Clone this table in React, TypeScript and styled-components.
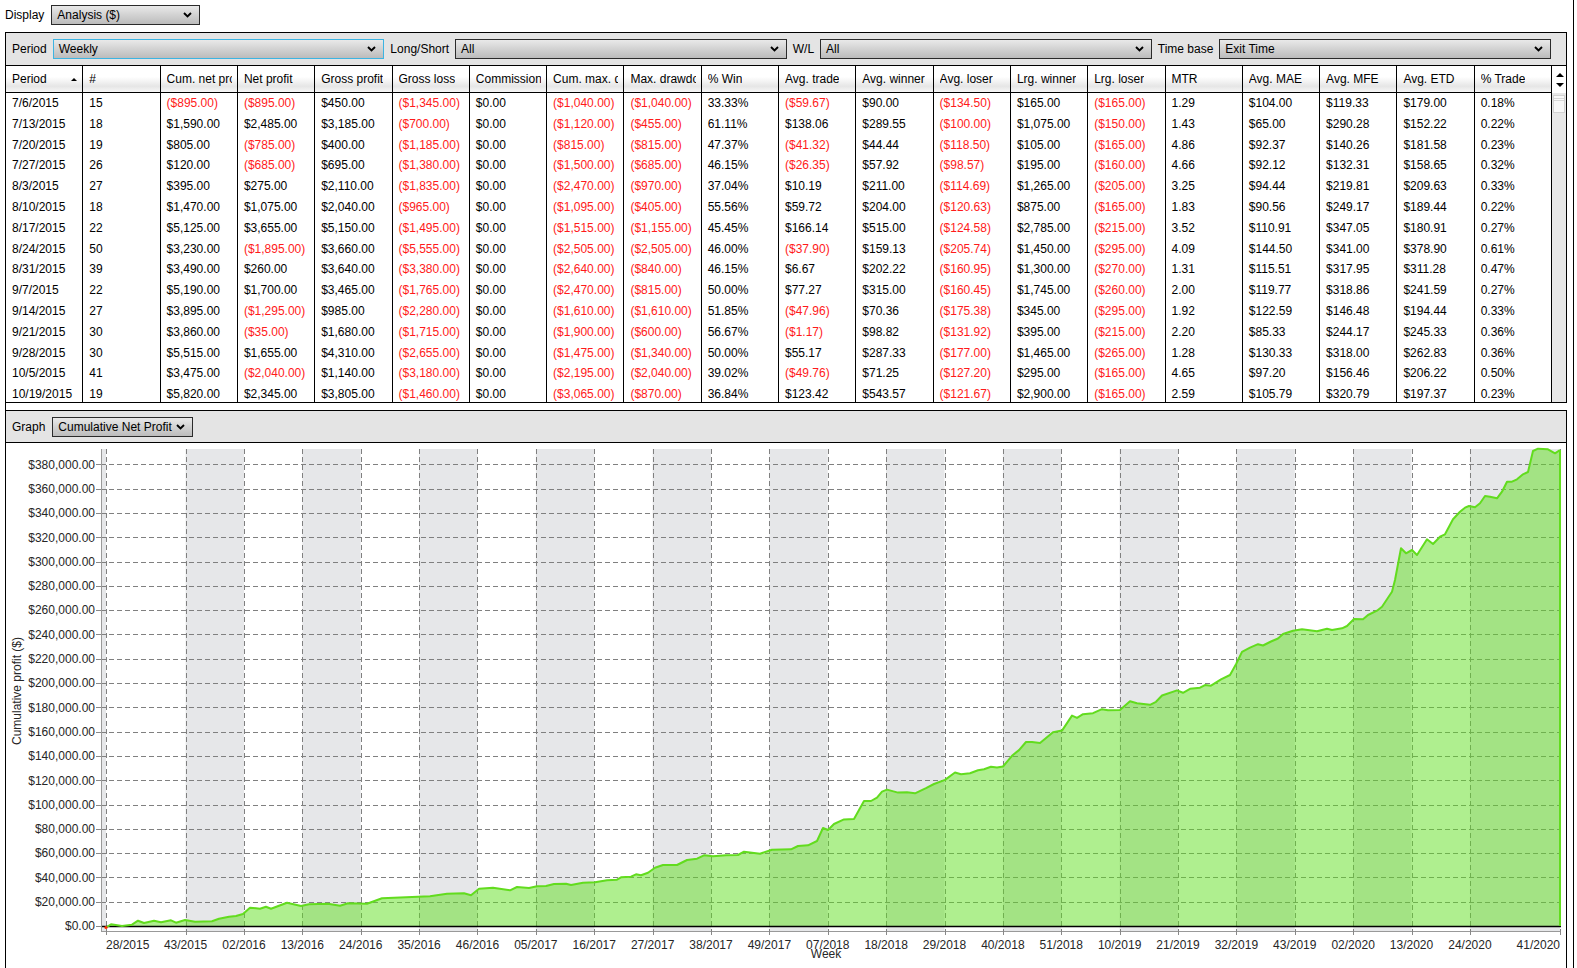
import React from 'react';
import styled, { createGlobalStyle } from 'styled-components';

const GlobalStyle = createGlobalStyle`
  html, body {
    margin: 0;
    padding: 0;
    background: #fff;
    overflow: hidden;
  }
  body {
    font-family: "Liberation Sans", Arial, sans-serif;
    font-size: 12px;
    color: #000;
  }
`;

const Page = styled.div`
  display: flex;
  width: 1577px;
  height: 968px;
`;

const LeftColumn = styled.div`
  display: flex;
  flex-direction: column;
  width: 1567px;
  flex: none;
`;

const RightRule = styled.div`
  margin-left: 6px;
  width: 0;
  border-left: 1px solid #000;
`;

const TopBar = styled.div`
  display: flex;
  align-items: center;
  gap: 7px;
  height: 32px;
  box-sizing: border-box;
  padding: 5px 0 7px 5px;
`;

const Label = styled.span`
  white-space: nowrap;
  line-height: 14px;
`;

const Frame = styled.div`
  display: flex;
  flex-direction: column;
  margin-left: 5px;
  width: 1562px;
  height: 950px;
  box-sizing: border-box;
  border-left: 1px solid #000;
  border-top: 1px solid #000;
`;

const FilterBar = styled.div`
  display: flex;
  align-items: center;
  gap: 6px;
  height: 33px;
  box-sizing: border-box;
  padding: 0 15px 0 6px;
  background: #e4e4e4;
  border-bottom: 1px solid #000;
  border-right: 1px solid #000;
`;

const SelectBox = styled.div<{ $width?: number; $focused?: boolean }>`
  display: flex;
  align-items: center;
  justify-content: space-between;
  ${(p) => (p.$width ? `width: ${p.$width}px;` : 'flex: 1 1 0;')}
  height: 20px;
  box-sizing: border-box;
  padding: 0 7px 0 5px;
  border: 1px solid ${(p) => (p.$focused ? '#3db4e2' : '#2b2b2b')};
  background: linear-gradient(to bottom, #e9e9e9 0%, #d4d4d4 45%, #bcbcbc 100%);
  white-space: nowrap;
  overflow: hidden;
`;

const Chevron = () => (
  <svg width="9" height="6" viewBox="0 0 9 6">
    <polyline points="1,1 4.5,4.5 8,1" fill="none" stroke="#000" strokeWidth="1.9" />
  </svg>
);

const Select = ({ value, width, focused }: { value: string; width?: number; focused?: boolean }) => (
  <SelectBox $width={width} $focused={focused}>
    <span>{value}</span>
    <Chevron />
  </SelectBox>
);

const Table = styled.div`
  display: flex;
  border-right: 1px solid #000;
  border-bottom: 1px solid #000;
`;

const DataArea = styled.div`
  flex: 1;
  min-width: 0;
`;

const HeaderRow = styled.div`
  display: grid;
  grid-template-columns: repeat(20, 1fr);
  height: 27px;
  box-sizing: border-box;
  border-bottom: 1px solid #000;
  background: linear-gradient(to bottom, #fff 0%, #fff 42%, #e6e6e6 78%, #f6f6f6 100%);
`;

const HeaderCell = styled.div`
  display: flex;
  align-items: center;
  justify-content: space-between;
  min-width: 0;
  padding: 0 5px 0 6px;
  border-right: 1px solid #000;
  white-space: nowrap;
  overflow: hidden;
`;

const HeaderText = styled.span`
  min-width: 0;
  overflow: hidden;
  text-overflow: clip;
`;

const SortArrow = styled.span`
  width: 0;
  height: 0;
  border-left: 3px solid transparent;
  border-right: 3px solid transparent;
  border-bottom: 3px solid #000;
  flex: none;
`;

const Body = styled.div`
  height: 309px;
  overflow: hidden;
`;

const Row = styled.div`
  display: grid;
  grid-template-columns: repeat(20, 1fr);
  height: 20.8px;
`;

const Cell = styled.div<{ $neg?: boolean }>`
  min-width: 0;
  padding: 0 4px 0 6px;
  border-right: 1px solid #000;
  line-height: 20.8px;
  white-space: nowrap;
  overflow: hidden;
  color: ${(p) => (p.$neg ? '#ff1a1a' : '#000')};
`;

const ScrollBar = styled.div`
  display: flex;
  flex-direction: column;
  width: 14px;
`;

const ScrollHead = styled.div`
  display: flex;
  flex-direction: column;
  align-items: center;
  justify-content: center;
  gap: 6px;
  height: 27px;
  padding-left: 2px;
  box-sizing: border-box;
  background: #fff;
`;

const ArrowUp = styled.span`
  width: 0;
  height: 0;
  border-left: 4px solid transparent;
  border-right: 4px solid transparent;
  border-bottom: 4px solid #000;
`;

const ArrowDown = styled.span`
  width: 0;
  height: 0;
  border-left: 4px solid transparent;
  border-right: 4px solid transparent;
  border-top: 4px solid #000;
`;

const Track = styled.div`
  flex: 1;
  padding: 2px 0 0 1px;
  background: #e7e7e7;
`;

const Thumb = styled.div`
  width: 12px;
  height: 18px;
  box-sizing: border-box;
  border: 1px solid #d2d2d2;
  background: linear-gradient(to bottom, #fafafa 0px, #fafafa 2px, #d8d8d8 2px, #d8d8d8 3px, #fafafa 3px, #fafafa 4px, #d8d8d8 4px, #d8d8d8 5px, #f8f8f8 5px);
`;

const Gap = styled.div`
  height: 7px;
  flex: none;
`;

const GraphPanel = styled.div`
  flex: 1;
  display: flex;
  flex-direction: column;
  border-top: 1px solid #000;
  border-right: 1px solid #000;
  min-height: 0;
`;

const GraphHeader = styled.div`
  display: flex;
  align-items: center;
  gap: 7px;
  height: 32px;
  flex: none;
  box-sizing: border-box;
  padding-left: 6px;
  background: #e4e4e4;
  border-bottom: 1px solid #000;
`;

const GraphBody = styled.div`
  flex: 1;
  overflow: hidden;
  svg {
    display: block;
  }
`;

const headers = [
  'Period', '#', 'Cum. net profit', 'Net profit', 'Gross profit', 'Gross loss', 'Commission',
  'Cum. max. drawdown', 'Max. drawdown', '% Win', 'Avg. trade', 'Avg. winner', 'Avg. loser',
  'Lrg. winner', 'Lrg. loser', 'MTR', 'Avg. MAE', 'Avg. MFE', 'Avg. ETD', '% Trade',
];

const rows: string[][] = [
  ['7/6/2015', '15', '($895.00)', '($895.00)', '$450.00', '($1,345.00)', '$0.00', '($1,040.00)', '($1,040.00)', '33.33%', '($59.67)', '$90.00', '($134.50)', '$165.00', '($165.00)', '1.29', '$104.00', '$119.33', '$179.00', '0.18%'],
  ['7/13/2015', '18', '$1,590.00', '$2,485.00', '$3,185.00', '($700.00)', '$0.00', '($1,120.00)', '($455.00)', '61.11%', '$138.06', '$289.55', '($100.00)', '$1,075.00', '($150.00)', '1.43', '$65.00', '$290.28', '$152.22', '0.22%'],
  ['7/20/2015', '19', '$805.00', '($785.00)', '$400.00', '($1,185.00)', '$0.00', '($815.00)', '($815.00)', '47.37%', '($41.32)', '$44.44', '($118.50)', '$105.00', '($165.00)', '4.86', '$92.37', '$140.26', '$181.58', '0.23%'],
  ['7/27/2015', '26', '$120.00', '($685.00)', '$695.00', '($1,380.00)', '$0.00', '($1,500.00)', '($685.00)', '46.15%', '($26.35)', '$57.92', '($98.57)', '$195.00', '($160.00)', '4.66', '$92.12', '$132.31', '$158.65', '0.32%'],
  ['8/3/2015', '27', '$395.00', '$275.00', '$2,110.00', '($1,835.00)', '$0.00', '($2,470.00)', '($970.00)', '37.04%', '$10.19', '$211.00', '($114.69)', '$1,265.00', '($205.00)', '3.25', '$94.44', '$219.81', '$209.63', '0.33%'],
  ['8/10/2015', '18', '$1,470.00', '$1,075.00', '$2,040.00', '($965.00)', '$0.00', '($1,095.00)', '($405.00)', '55.56%', '$59.72', '$204.00', '($120.63)', '$875.00', '($165.00)', '1.83', '$90.56', '$249.17', '$189.44', '0.22%'],
  ['8/17/2015', '22', '$5,125.00', '$3,655.00', '$5,150.00', '($1,495.00)', '$0.00', '($1,515.00)', '($1,155.00)', '45.45%', '$166.14', '$515.00', '($124.58)', '$2,785.00', '($215.00)', '3.52', '$110.91', '$347.05', '$180.91', '0.27%'],
  ['8/24/2015', '50', '$3,230.00', '($1,895.00)', '$3,660.00', '($5,555.00)', '$0.00', '($2,505.00)', '($2,505.00)', '46.00%', '($37.90)', '$159.13', '($205.74)', '$1,450.00', '($295.00)', '4.09', '$144.50', '$341.00', '$378.90', '0.61%'],
  ['8/31/2015', '39', '$3,490.00', '$260.00', '$3,640.00', '($3,380.00)', '$0.00', '($2,640.00)', '($840.00)', '46.15%', '$6.67', '$202.22', '($160.95)', '$1,300.00', '($270.00)', '1.31', '$115.51', '$317.95', '$311.28', '0.47%'],
  ['9/7/2015', '22', '$5,190.00', '$1,700.00', '$3,465.00', '($1,765.00)', '$0.00', '($2,470.00)', '($815.00)', '50.00%', '$77.27', '$315.00', '($160.45)', '$1,745.00', '($260.00)', '2.00', '$119.77', '$318.86', '$241.59', '0.27%'],
  ['9/14/2015', '27', '$3,895.00', '($1,295.00)', '$985.00', '($2,280.00)', '$0.00', '($1,610.00)', '($1,610.00)', '51.85%', '($47.96)', '$70.36', '($175.38)', '$345.00', '($295.00)', '1.92', '$122.59', '$146.48', '$194.44', '0.33%'],
  ['9/21/2015', '30', '$3,860.00', '($35.00)', '$1,680.00', '($1,715.00)', '$0.00', '($1,900.00)', '($600.00)', '56.67%', '($1.17)', '$98.82', '($131.92)', '$395.00', '($215.00)', '2.20', '$85.33', '$244.17', '$245.33', '0.36%'],
  ['9/28/2015', '30', '$5,515.00', '$1,655.00', '$4,310.00', '($2,655.00)', '$0.00', '($1,475.00)', '($1,340.00)', '50.00%', '$55.17', '$287.33', '($177.00)', '$1,465.00', '($265.00)', '1.28', '$130.33', '$318.00', '$262.83', '0.36%'],
  ['10/5/2015', '41', '$3,475.00', '($2,040.00)', '$1,140.00', '($3,180.00)', '$0.00', '($2,195.00)', '($2,040.00)', '39.02%', '($49.76)', '$71.25', '($127.20)', '$295.00', '($165.00)', '4.65', '$97.20', '$156.46', '$206.22', '0.50%'],
  ['10/19/2015', '19', '$5,820.00', '$2,345.00', '$3,805.00', '($1,460.00)', '$0.00', '($3,065.00)', '($870.00)', '36.84%', '$123.42', '$543.57', '($121.67)', '$2,900.00', '($165.00)', '2.59', '$105.79', '$320.79', '$197.37', '0.23%'],
];

// chart geometry in page pixels
const PLOT = { left: 101, right: 1561, top: 449, bottom: 931, zero: 926, step: 24.3 };
const WEEK = 5.307;

const ticks = [
  '28/2015', '43/2015', '02/2016', '13/2016', '24/2016', '35/2016', '46/2016', '05/2017', '16/2017',
  '27/2017', '38/2017', '49/2017', '07/2018', '18/2018', '29/2018', '40/2018', '51/2018', '10/2019',
  '21/2019', '32/2019', '43/2019', '02/2020', '13/2020', '24/2020', '41/2020',
];

const tickX = (i: number) =>
  i === 0 ? 106 : i === ticks.length - 1 ? 1560 : 106 + (15 + 11 * (i - 1)) * WEEK;

const curve = `106,927.5 111,924.3 122,926 132,924.7 138,920.7 144,923 154,920.7 161,922.3 171,920.3
176,922.7 185,920 195,921.7 212,921.3 219,918.7 229,916.7 236,916 243,914 250,907.7 260,908.7
266,906.7 271,908.7 287,902.7 301,906 309,904.3 328,903.7 340,905.7 348,903.3 367,903.7 382,898.3
430,896.3 447,893.7 464,893.3 471,895.3 479,888.7 493,887.7 510,890.3 517,887 529,888 537,886.3
546,886 554,884 566,883.7 571,885 583,882.7 595,882.3 607,880.3 617,879.7 621,877.3 631,876.7
636,874.3 641,875.3 648,872.7 655,867.7 663,865 677,865 687,860 697,858.7 704,855.3 713,856.3
726,855.3 738,855 744,851.7 760,853.7 772,849.7 791,849.3 798,846 808,845.3 817,841 823,828
828,830 834,824 844,819.4 854,819 864,801 871,801 877,797.6 882,791.6 887,789.6 898,792.6
907,792.3 915,793.3 926,788.2 934,784 945,779.9 955,772.5 961,774.2 970,773.2 978,770.2 984,769.2
991,766.8 997,767.5 1003,766.5 1012,755.8 1019,750.1 1026,742 1032,742 1040,743 1053,732.3
1062,730.6 1072,715.6 1077,717.9 1083,714.2 1093,713.2 1102,709.2 1108,710.2 1120,709.9 1124,706.5
1130,701.2 1137,703.2 1150,704.8 1156,701.8 1162,695.5 1177,690.4 1183,692.8 1190,688.8 1200,687.7
1205,685.1 1211,685.7 1221,679.4 1230,675 1236,664.3 1242,651.9 1250,647.6 1258,644.2 1263,645.5
1271,641.5 1278,638.5 1283,634 1293,630.7 1302,629.3 1317,631.3 1327,628.7 1332,630 1342,628.3
1347,626 1354,619 1363,619.3 1368,615 1377,610.7 1382,606.7 1387,599.3 1392,591.7 1395,580
1401,548.3 1406,553.3 1412,550 1417,555 1427,539.3 1433,544 1440,536.7 1445,534.3 1453,519.3
1460,511.7 1465,507.7 1469,506 1475,507.3 1480,503.3 1485,496 1490,496.7 1497,498.3 1502,491.7
1507,481.7 1512,481.7 1517,479.3 1523,474.3 1528,472 1533,451 1538,448.7 1548,449.3 1555,453.3
1560,450`.replace(/\s+/g, ' ').trim();

const money = (v: number) => '$' + v.toLocaleString('en-US') + ',000.00';

const ProfitChart = () => {
  const gridY = Array.from({ length: 20 }, (_, k) => PLOT.zero - k * PLOT.step);
  const area = `106,${PLOT.zero} ${curve} 1560,${PLOT.zero}`;
  return (
    <svg width="1560" height="525" viewBox="6 443 1560 525" fontFamily='"Liberation Sans", Arial, sans-serif' fontSize="12">
      <rect x={PLOT.left} y={PLOT.top} width={106 - PLOT.left} height={PLOT.bottom - PLOT.top} fill="#e6e7e9" />
      {ticks.slice(0, -1).map((_, k) =>
        k % 2 === 1 ? (
          <rect key={k} x={tickX(k)} y={PLOT.top} width={tickX(k + 1) - tickX(k)} height={PLOT.bottom - PLOT.top} fill="#e6e7e9" />
        ) : null,
      )}
      {gridY.slice(1).map((y) => (
        <line key={y} x1={PLOT.left} x2={PLOT.right} y1={Math.round(y) + 0.5} y2={Math.round(y) + 0.5} stroke="#808080" strokeDasharray="5 3" />
      ))}
      {ticks.map((t, i) => (
        <line key={t} x1={Math.round(tickX(i)) + 0.5} x2={Math.round(tickX(i)) + 0.5} y1={PLOT.top} y2={PLOT.bottom} stroke="#808080" strokeDasharray="5 3" />
      ))}
      <polygon points={area} fill="rgba(96,224,32,0.5)" />
      <line x1={PLOT.left} x2={PLOT.right} y1={PLOT.zero + 0.5} y2={PLOT.zero + 0.5} stroke="#000" strokeWidth="1.4" />
      <polyline points={curve} fill="none" stroke="#62dc1e" strokeWidth="2" strokeLinejoin="round" />
      <line x1="1560" x2="1560" y1="450" y2={PLOT.zero} stroke="#62dc1e" strokeWidth="2" />
      <circle cx="106" cy="927.5" r="1.6" fill="#ff2a00" />
      <line x1={PLOT.left + 0.5} x2={PLOT.left + 0.5} y1={PLOT.top} y2={PLOT.bottom} stroke="#999" />
      <line x1={PLOT.left} x2={PLOT.right} y1={PLOT.bottom + 0.5} y2={PLOT.bottom + 0.5} stroke="#999" />
      {gridY.map((y, k) => (
        <g key={k}>
          <line x1="96" x2={PLOT.left} y1={Math.round(y) + 0.5} y2={Math.round(y) + 0.5} stroke="#888" />
          <text x="95" y={y + 4.3} textAnchor="end" fill="#262626">
            {k === 0 ? '$0.00' : money(k * 20)}
          </text>
        </g>
      ))}
      {ticks.map((t, i) => (
        <g key={t}>
          <line x1={Math.round(tickX(i)) + 0.5} x2={Math.round(tickX(i)) + 0.5} y1={PLOT.bottom} y2={PLOT.bottom + 4} stroke="#888" />
          <text
            x={i === 0 ? 106 : tickX(i)}
            y="949"
            textAnchor={i === 0 ? 'start' : i === ticks.length - 1 ? 'end' : 'middle'}
            fill="#262626"
          >
            {t}
          </text>
        </g>
      ))}
      <text x="826" y="958" textAnchor="middle" fill="#262626">Week</text>
      <text transform="translate(20.5 691) rotate(-90)" textAnchor="middle" fill="#262626">Cumulative profit ($)</text>
    </svg>
  );
};

export default function App() {
  return (
    <>
      <GlobalStyle />
      <Page>
        <LeftColumn>
          <TopBar>
            <Label>Display</Label>
            <Select value="Analysis ($)" width={149} />
          </TopBar>
          <Frame>
            <FilterBar>
              <Label>Period</Label>
              <Select value="Weekly" focused />
              <Label>Long/Short</Label>
              <Select value="All" />
              <Label>W/L</Label>
              <Select value="All" />
              <Label>Time base</Label>
              <Select value="Exit Time" />
            </FilterBar>
            <Table>
              <DataArea>
                <HeaderRow>
                  {headers.map((h, i) => (
                    <HeaderCell key={h}>
                      <HeaderText>{h}</HeaderText>
                      {i === 0 && <SortArrow />}
                    </HeaderCell>
                  ))}
                </HeaderRow>
                <Body>
                  {rows.map((r) => (
                    <Row key={r[0]}>
                      {r.map((v, i) => (
                        <Cell key={i} $neg={v.startsWith('(')}>
                          {v}
                        </Cell>
                      ))}
                    </Row>
                  ))}
                </Body>
              </DataArea>
              <ScrollBar>
                <ScrollHead>
                  <ArrowUp />
                  <ArrowDown />
                </ScrollHead>
                <Track>
                  <Thumb />
                </Track>
              </ScrollBar>
            </Table>
            <Gap />
            <GraphPanel>
              <GraphHeader>
                <Label>Graph</Label>
                <Select value="Cumulative Net Profit" width={141} />
              </GraphHeader>
              <GraphBody>
                <ProfitChart />
              </GraphBody>
            </GraphPanel>
          </Frame>
        </LeftColumn>
        <RightRule />
      </Page>
    </>
  );
}
